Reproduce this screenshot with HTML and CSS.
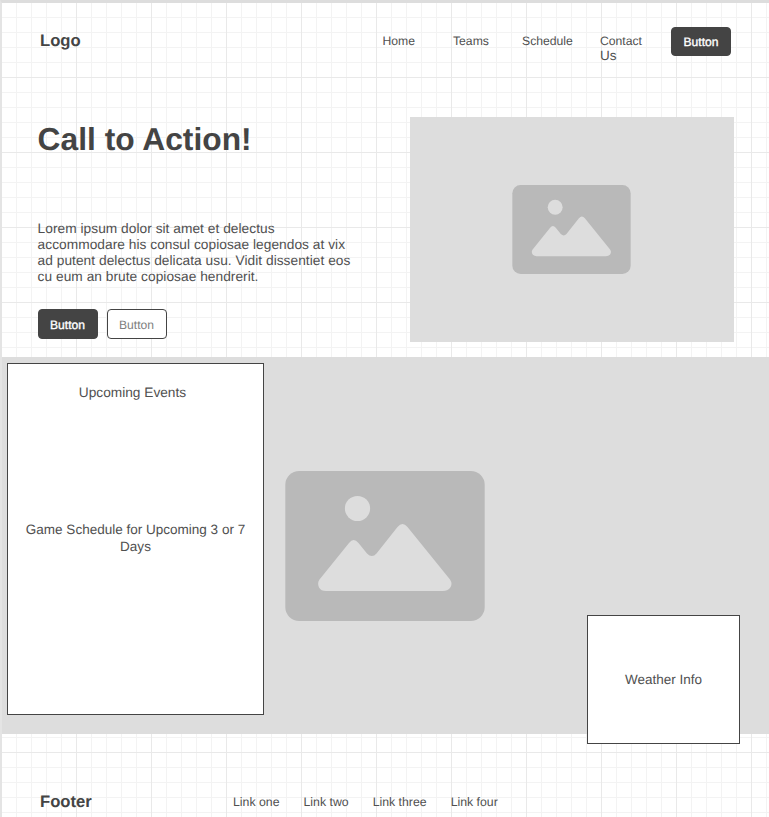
FILE: index.html
```html
<!DOCTYPE html>
<html lang="en">
<head>
<meta charset="utf-8">
<title>Wireframe</title>
<link rel="stylesheet" href="styles.css">
</head>
<body>
<svg class="defs" aria-hidden="true">
  <symbol id="picture" viewBox="0 0 200 150">
    <rect x=".3" width="199.400" height="150" rx="14" fill="#b9b9b9"/>
    <circle cx="72.500" cy="37.500" r="12.600" fill="#ddd"/>
    <path d="M34.500 108.500L64 72Q68.500 66 73.500 72L82 82.500Q87 87.500 91.500 82.500L112.500 56Q117.500 50 122.500 56L165 108.500Q168 113 165 117Q162.500 120 158 120H41Q36 120 34 116.500Q32 112 34.500 108.500Z" fill="#ddd"/>
  </symbol>
</svg>
<div class="page">
  <header class="header">
    <div class="brand">Logo</div>
    <nav class="nav">
      <a class="home">Home</a>
      <a class="teams">Teams</a>
      <a class="schedule">Schedule</a>
      <a class="contact">Contact <span class="us">Us</span></a>
    </nav>
    <button class="btn solid">Button</button>
  </header>
  <section class="hero">
    <div class="copy">
      <h1>Call to Action!</h1>
      <p>Lorem ipsum dolor sit amet et delectus<br>accommodare his consul copiosae legendos at vix<br>ad putent delectus delicata usu. Vidit dissentiet eos<br>cu eum an brute copiosae hendrerit.</p>
      <div class="actions">
        <button class="btn solid tall">Button</button>
        <button class="btn outline tall">Button</button>
      </div>
    </div>
    <div class="media"><svg class="small-picture"><use href="#picture"/></svg></div>
  </section>
  <section class="banner">
    <div class="events">
      <h2>Upcoming Events</h2>
      <p>Game Schedule for Upcoming 3 or 7<br>Days</p>
    </div>
    <svg class="large-picture"><use href="#picture"/></svg>
    <div class="weather">Weather Info</div>
  </section>
  <footer class="footer">
    <div class="brand">Footer</div>
    <nav class="links"><a>Link one</a><a>Link two</a><a>Link three</a><a>Link four</a></nav>
  </footer>
</div>
</body>
</html>
```
FILE: styles.css
```css
* { box-sizing: border-box; }
html, body { height: 100%; overflow: hidden; }
body {
  margin: 0;
  font-family: "Liberation Sans", Arial, sans-serif;
  color: #444;
  background: #fff;
  text-rendering: geometricPrecision;
}
h1, h2, p { margin: 0; }
.defs { position: absolute; width: 0; height: 0; }
.page {
  height: 817px;
  border-top: 3px solid #ddd;
  border-left: 2px solid #e4e4e4;
  background-image:
    linear-gradient(90deg, #e9e9e9 1px, transparent 1px),
    linear-gradient(#e9e9e9 1px, transparent 1px),
    linear-gradient(90deg, #f3f3f3 1px, transparent 1px),
    linear-gradient(#f3f3f3 1px, transparent 1px);
  background-size: 75px 75px, 75px 75px, 15px 15px, 15px 15px;
  background-position: 74px 74px, 74px 74px, 14px 14px, 14px 14px;
}
.header {
  display: flex;
  align-items: flex-start;
  height: 114px;
  padding: 24px 38px 0;
}
.brand { font-size: 16.67px; line-height: 20px; font-weight: bold; padding-top: 4px; }
.nav { display: flex; margin-left: auto; padding-top: 7px; font-size: 12.2px; line-height: 14px; color: #505050; }
.home { width: 70.500px; }
.teams { width: 69px; }
.schedule { width: 78px; }
.contact { width: 71px; padding-right: 20px; }
.us { font-size: 13.5px; line-height: 16px; }
.btn {
  width: 60px;
  height: 29px;
  padding: 0;
  border: 1px solid #444;
  border-radius: 4px;
  font: 12.1px/28px "Liberation Sans", Arial, sans-serif;
  text-align: center;
  text-rendering: geometricPrecision;
}
.solid { color: #fff; background: #444; -webkit-text-stroke: .35px #fff; }
.outline { color: #808080; background: #fff; }
.tall { height: 30px; padding: 1px 1px 0 0; }
.hero { display: flex; justify-content: space-between; height: 240px; padding: 0 35px 0 35.600px; }
h1 { padding-top: 4px; font-size: 31.750px; line-height: 36px; }
.copy p { margin-top: 64px; font-size: 13.720px; line-height: 16px; letter-spacing: .035px; color: #505050; white-space: nowrap; }
.actions { display: flex; gap: 9px; margin: 24px 0 0 .4px; }
.media { display: flex; align-items: center; justify-content: center; width: 324px; height: 225px; padding-right: 1px; background: #ddd; }
.small-picture { width: 119px; height: 89px; }
.banner {
  position: relative;
  display: flex;
  align-items: flex-start;
  height: 377px;
  padding: 6px 0 0 5px;
  background: #ddd;
}
.events {
  width: 257px;
  height: 352px;
  padding-top: 20px;
  border: 1px solid #444;
  background: #fff;
  font-size: 13.7px;
  line-height: 17px;
  color: #505050;
  text-align: center;
}
.events h2 { padding-right: 6px; font-size: inherit; font-weight: normal; }
.events p { margin-top: 120px; font-size: 13.520px; }
.large-picture { width: 200px; height: 150px; margin: 108px 0 0 21px; }
.weather {
  position: absolute;
  top: 258px;
  left: 585px;
  width: 153px;
  height: 129px;
  border: 1px solid #444;
  background: #fff;
  font-size: 13.5px;
  line-height: 127px;
  color: #505050;
  text-align: center;
}
.footer { display: flex; padding: 54px 38px 0; }
.footer .brand { width: 193px; }
.links { display: flex; gap: 24px; padding-top: 7px; font-size: 12.3px; line-height: 14px; color: #505050; }
```
